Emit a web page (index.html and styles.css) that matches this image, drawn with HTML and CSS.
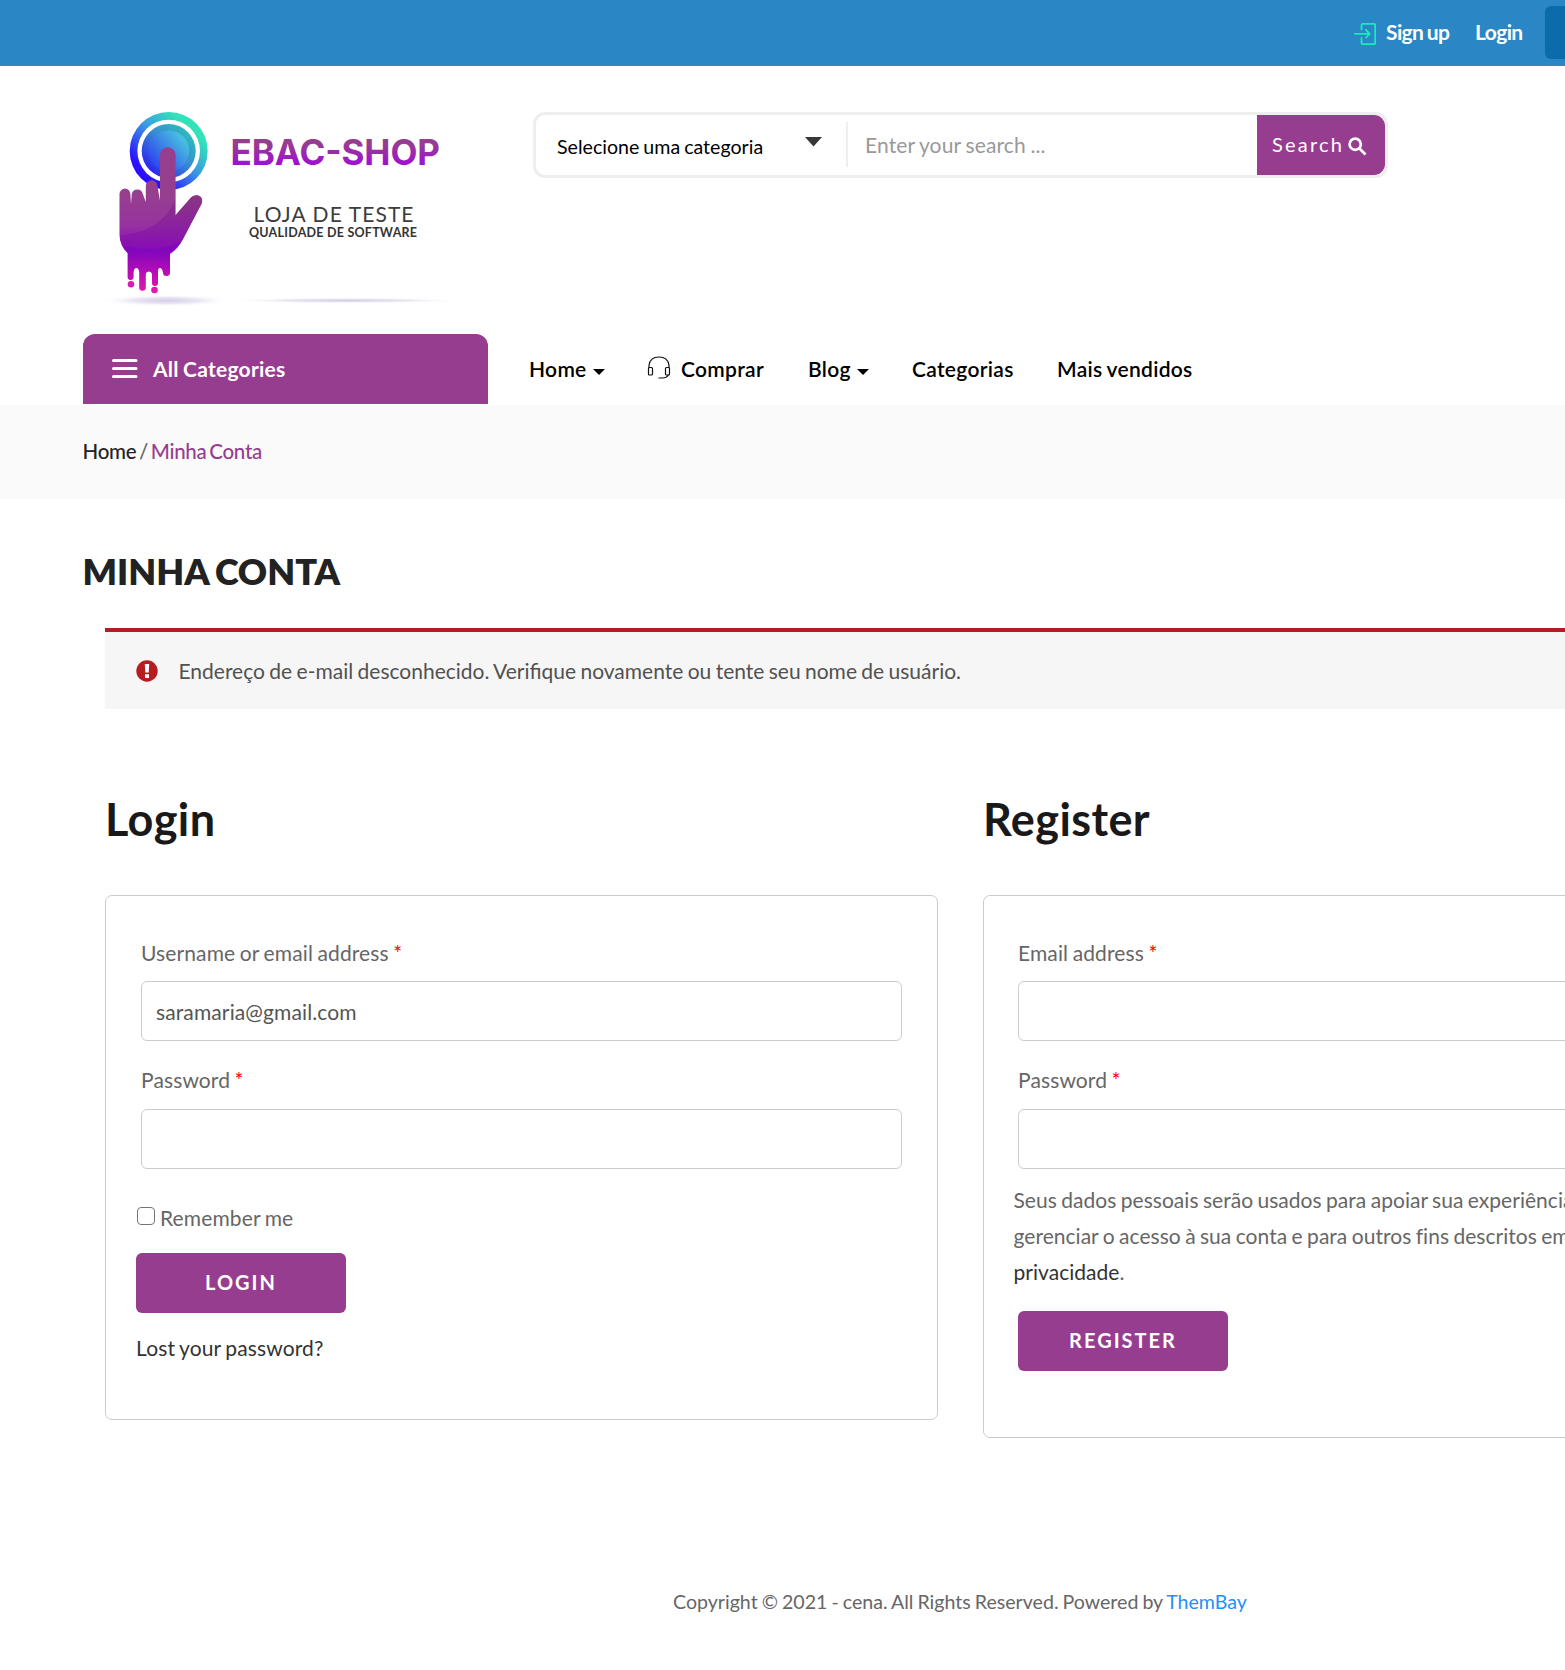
FILE: index.html
```html
<!DOCTYPE html>
<html lang="pt-BR">
<head>
<meta charset="utf-8">
<title>Minha Conta</title>
<link rel="stylesheet" href="styles.css">
</head>
<body>
<div class="page">
  <div class="topbar">
    <a class="topbar-link signup">
      <svg class="signup-icon" width="22" height="22" viewBox="0 0 22 22" fill="none" stroke="#14eebb" stroke-width="1.8" stroke-linejoin="round" stroke-linecap="round"><path d="M7.500 6.500V2.200q0-1.400 1.400-1.400H20q1.200 0 1.200 1.400v17.600q0 1.400-1.200 1.400H8.900q-1.400 0-1.400-1.400V15"/><path d="M.8 10.800H15.500M12 7l3.800 3.800L12 14.600"/></svg>
      <span>Sign up</span>
    </a>
    <a class="topbar-link topbar-login">Login</a>
    <span class="topbar-button"></span>
  </div>

  <header class="header">
    <svg class="logo" width="360" height="206" viewBox="100 106 360 206">
      <defs>
        <linearGradient id="ring" x1=".15" y1=".9" x2=".85" y2=".15"><stop offset="0" stop-color="#2a08ff"/><stop offset=".15" stop-color="#2a14ff"/><stop offset=".55" stop-color="#3a97e4"/><stop offset=".9" stop-color="#32e2b8"/></linearGradient>
        <linearGradient id="disc" x1=".15" y1=".9" x2=".85" y2=".15"><stop offset="0" stop-color="#2b20f0"/><stop offset=".6" stop-color="#368fd2"/><stop offset="1" stop-color="#30b8bd"/></linearGradient>
        <linearGradient id="core" x1=".1" y1=".9" x2=".9" y2=".2"><stop offset="0" stop-color="#2e3df0"/><stop offset="1" stop-color="#48c4e0"/></linearGradient>
        <linearGradient id="hand" gradientUnits="userSpaceOnUse" x1="0" y1="195" x2="0" y2="292"><stop offset="0" stop-color="#963f8e"/><stop offset=".3" stop-color="#9633a0"/><stop offset=".62" stop-color="#8e06bd"/><stop offset="1" stop-color="#e416ac"/></linearGradient>
        <linearGradient id="palm" gradientUnits="userSpaceOnUse" x1="0" y1="195" x2="0" y2="252"><stop offset="0" stop-color="#87347f"/><stop offset="1" stop-color="#8809b8"/></linearGradient>
        <linearGradient id="drip" gradientUnits="userSpaceOnUse" x1="0" y1="250" x2="0" y2="292"><stop offset="0" stop-color="#7c05bd"/><stop offset="1" stop-color="#e416ac"/></linearGradient>
        <linearGradient id="word" x1="0" y1=".3" x2="0" y2=".85"><stop offset="0" stop-color="#963d90"/><stop offset="1" stop-color="#a00bd8"/></linearGradient>
        <radialGradient id="shade"><stop offset="0" stop-color="#d3cde6"/><stop offset=".5" stop-color="#e9e6f3"/><stop offset="1" stop-color="#fff" stop-opacity="0"/></radialGradient>
      </defs>
      <ellipse cx="166" cy="300.500" rx="66" ry="6" fill="url(#shade)"/>
      <ellipse cx="346" cy="300.500" rx="122" ry="3" fill="url(#shade)"/>
      <circle cx="168.700" cy="151" r="39" fill="url(#ring)"/>
      <circle cx="168.700" cy="151" r="31.300" fill="#fff"/>
      <circle cx="168.700" cy="151" r="27" fill="url(#disc)"/>
      <circle cx="168.700" cy="151" r="20.500" fill="url(#core)"/>
      <path fill="url(#hand)" d="M119.500 235V194a5.400 5.400 0 0 1 10.900 0L131 204l.8-10a5.600 5.600 0 0 1 11 0l3 8V186a5.800 5.800 0 0 1 11.600 0l2.600 14.500V155a7.700 7.700 0 0 1 15.600 0v60.500L191 197.500c6-5 13-1 10.700 6L183 239q-4 8-13 14.500v19a3.500 3.500 0 0 1-7 0q-1-4.500-3-4.500t-2 4v11a3 3 0 0 1-6 0v-9q-.5-2.500-3.200-2.500t-3 2.500v13.500a3.300 3.300 0 0 1-6.600 0V272q-.6-4-2.800-4t-2.800 4v5a3 3 0 0 1-6 0v-24Q119.500 245 119.500 235z"/>
      <path fill="url(#palm)" opacity=".8" d="M120 235q41-2 55-35.500v16L191 197.500c6-5 13-1 10.700 6L183 239q-4 8-13 14.500h-42Q120.500 247 120 235z"/>
      <path fill="url(#drip)" opacity=".65" d="M123 245q28 9 58-3-4 8-11 12v6h-42v-7z"/>
      <circle cx="131" cy="284.200" r="3.300" fill="#d91cb4"/>
      <circle cx="154.500" cy="290" r="3.300" fill="#e416b4"/>
      <text class="logo-name" x="230.500" y="165" textLength="209.500" fill="url(#word)">EBAC-SHOP</text>
      <text class="logo-tag" x="253.500" y="221.500" textLength="160">LOJA DE TESTE</text>
      <text class="logo-sub" x="249" y="236.500" textLength="168">QUALIDADE DE SOFTWARE</text>
    </svg>

    <form class="search">
      <div class="search-select"><span>Selecione uma categoria</span>
        <svg class="select-arrow" width="17" height="10" viewBox="0 0 17 10"><path d="M0 0h17L8.500 9.500z" fill="#383838"/></svg>
      </div>
      <div class="search-field">Enter your search ...</div>
      <div class="search-button"><span>Search</span>
        <svg width="19" height="19" viewBox="0 0 19 19" fill="none" stroke="#fff" stroke-width="2.700"><circle cx="7.200" cy="7.200" r="5.600"/><path d="M11.200 11.200l6.300 6.300"/></svg>
      </div>
    </form>
  </header>

  <nav class="nav">
    <div class="all-categories">
      <svg width="26" height="21" viewBox="0 0 26 21" stroke="#fff" stroke-width="3" stroke-linecap="round"><path d="M1.500 2.500h22.500M1.500 10.500h22.500M1.500 18.500h22.500"/></svg>
      <span>All Categories</span>
    </div>
    <div class="menu">
      <a class="menu-item item-home">Home<i class="caret"></i></a>
      <a class="menu-item item-comprar">
        <svg class="headset" width="24" height="24" viewBox="0 0 24 24" fill="none" stroke="#111" stroke-width="1.200"><path d="M2 12V9.500Q3 1 12 1t10 8.500V12"/><rect x="1.500" y="11.500" width="4" height="7.500" rx="1"/><rect x="18.500" y="11.500" width="4" height="7.500" rx="1"/><path d="M21.500 19q-2 3-6 3h-4" /></svg>
        Comprar</a>
      <a class="menu-item item-blog">Blog<i class="caret"></i></a>
      <a class="menu-item item-cat">Categorias</a>
      <a class="menu-item">Mais vendidos</a>
    </div>
  </nav>

  <div class="breadcrumb"><a class="crumb-home">Home</a> / <span class="crumb-current">Minha Conta</span></div>

  <main class="content">
    <h1 class="title">MINHA CONTA</h1>
    <div class="alert">
      <svg width="22" height="22" viewBox="0 0 22 22"><circle cx="11" cy="11" r="10.700" fill="#b81c23"/><path d="M8.800 4h4.400l-.5 8.500H9.300zM9 14.300h4v3.600H9z" fill="#fff"/></svg>
      <span>Endereço de e-mail desconhecido. Verifique novamente ou tente seu nome de usuário.</span>
    </div>
    <div class="columns">
      <section>
        <h2 class="subtitle">Login</h2>
        <form class="card card-login">
          <label class="label">Username or email address <b class="req">*</b></label>
          <div class="input">saramaria@gmail.com</div>
          <label class="label label-next">Password <b class="req">*</b></label>
          <div class="input"></div>
          <label class="remember"><span class="checkbox"></span><span>Remember me</span></label>
          <div class="button button-login">LOGIN</div>
          <a class="lost">Lost your password?</a>
        </form>
      </section>
      <section>
        <h2 class="subtitle">Register</h2>
        <form class="card card-register">
          <label class="label">Email address <b class="req">*</b></label>
          <div class="input"></div>
          <label class="label label-next">Password <b class="req">*</b></label>
          <div class="input"></div>
          <p class="privacy">Seus dados pessoais serão usados para apoiar sua experiência<br>gerenciar o acesso à sua conta e para outros fins descritos em<br><a class="privacy-link">privacidade</a>.</p>
          <div class="button">REGISTER</div>
        </form>
      </section>
    </div>
  </main>

  <footer class="footer">Copyright © 2021 - cena. All Rights Reserved. Powered by <a class="brand">ThemBay</a></footer>
</div>
</body>
</html>
```
FILE: styles.css
```css
* { box-sizing: border-box; }
html, body { overflow: hidden; }
body {
  margin: 0;
  background: #fff;
  color: #666;
  font-family: Lato, "Liberation Sans", sans-serif;
  font-size: 21px;
  line-height: 36px;
  word-spacing: -1px;
}
.page { width: 1920px; height: 1670px; overflow: hidden; white-space: nowrap; }

.topbar {
  height: 66px;
  padding: 6px 0 7px 1354px;
  display: flex;
  align-items: center;
  background: #2a86c4;
  color: #fff;
  font-size: 21px;
  letter-spacing: -.6px;
  font-weight: 700;
}
.topbar-link { display: flex; align-items: center; padding-bottom: 1px; }
.signup { width: 121px; gap: 10px; }
.signup-icon { margin-top: 3px; }
.topbar-login { width: 70px; }
.topbar-button { width: 180px; height: 53px; border-radius: 6px; background: #0b6bab; }

.header { height: 268px; padding: 40px 0 0 100px; display: flex; align-items: flex-start; }
.logo { word-spacing: 0; }
.logo-name { font: 700 35px Inter, sans-serif; }
.logo-tag { font: 400 21px Lato, sans-serif; fill: #3c3c3c; }
.logo-sub { font: 700 12.500px Lato, sans-serif; fill: #333; }

.search {
  width: 855px;
  height: 66px;
  margin: 6px 0 0 73px;
  display: flex;
  border: 3px solid #eee;
  border-radius: 12px;
}
.search-select {
  width: 312px;
  height: 45px;
  margin-top: 7px;
  padding: 4px 24px 0 21px;
  display: flex;
  align-items: center;
  justify-content: space-between;
  border-right: 2px solid #eee;
  color: #000;
  font-size: 19.600px;
}
.select-arrow { margin-top: -10px; }
.search-field { flex: 1; padding: 12px 0 0 17px; color: #999; letter-spacing: .15px; }
.search-button {
  width: 128px;
  padding: 0 0 2px 15px;
  display: flex;
  align-items: center;
  gap: 4px;
  background: #963d8f;
  border-radius: 0 11px 11px 0;
  color: #fff;
  font-size: 20px;
  letter-spacing: 2.200px;
}
.search-button svg { margin-top: 4px; }

.nav { height: 71px; padding-left: 83px; display: flex; }
.all-categories {
  width: 405px;
  height: 70px;
  padding-left: 29px;
  display: flex;
  align-items: center;
  gap: 15px;
  background: #963d8f;
  border-radius: 12px 12px 0 0;
  color: #fff;
  font-weight: 700;
  letter-spacing: .25px;
}
.all-categories svg { margin-top: -2px; }
.menu { padding-left: 41px; height: 70px; display: flex; align-items: center; color: #000; font-weight: 600; letter-spacing: .3px; }
.menu-item { display: flex; align-items: center; }
.item-home { width: 118px; }
.item-comprar { width: 161px; }
.item-blog { width: 104px; }
.item-cat { width: 145px; }
.headset { margin: -3px 10px 0 0; }
.caret { margin: 5px 0 0 6px; border: 6px solid transparent; border-top: 6px solid #000; border-bottom: 0; }

.breadcrumb {
  height: 94px;
  padding: 28px 0 0 82.500px;
  background: #fafafa;
  font-size: 20.500px;
  font-weight: 500;
  letter-spacing: -.25px;
  word-spacing: -2.300px;
}
.crumb-home { color: #222; }
.crumb-current { color: #963d8f; }

.content { padding: 0 83px; }
.title { height: 129px; margin: 0 0 0 -.5px; padding-top: 54px; font-size: 36px; line-height: 36px; font-weight: 800; word-spacing: -2px; color: #222; }
.alert {
  height: 81px;
  margin-left: 22px;
  padding-left: 31px;
  display: flex;
  align-items: center;
  gap: 20.500px;
  border-top: 4px solid #b81c23;
  background: #f6f6f6;
  color: #515151;
}
.columns { margin: 0 22px; display: grid; grid-template-columns: 833px 833px; column-gap: 45px; align-items: start; }
.subtitle { height: 186px; margin: 0; padding-top: 83px; font-size: 45px; line-height: 54px; font-weight: 700; letter-spacing: .4px; color: #191919; }
.card { border: 1px solid #ccc; border-radius: 7px; padding: 39px 35px 0; letter-spacing: .12px; }
.card-login { height: 525px; }
.card-register { height: 543px; padding-left: 34px; }
.label { display: block; height: 46px; }
.label-next { margin-top: 21px; height: 47px; }
.req { color: red; font-weight: 400; }
.input { height: 60px; padding: 12px 14px; border: 1px solid #ccc; border-radius: 6px; color: #555; }
.remember { display: flex; align-items: center; gap: 5px; margin: 31px 0 0 -4px; }
.checkbox { width: 18px; height: 18px; margin-top: -4px; border: 1.500px solid #767676; border-radius: 4px; }
.button {
  width: 210px;
  height: 60px;
  padding-bottom: 2px;
  display: flex;
  align-items: center;
  justify-content: center;
  border-radius: 6px;
  background: #963d8f;
  color: #fff;
  font-size: 20px;
  font-weight: 700;
  letter-spacing: 2px;
}
.button-login { margin: 17px 0 0 -5px; }
.lost { display: block; margin: 17px 0 0 -5px; color: #333; }
.privacy { margin: 13px 0 21px -4.500px; letter-spacing: .03px; }
.privacy-link { color: #333; }

.footer { margin-top: 146px; padding-left: 673px; font-size: 19.600px; }
.brand { color: #1e90ff; }
```
